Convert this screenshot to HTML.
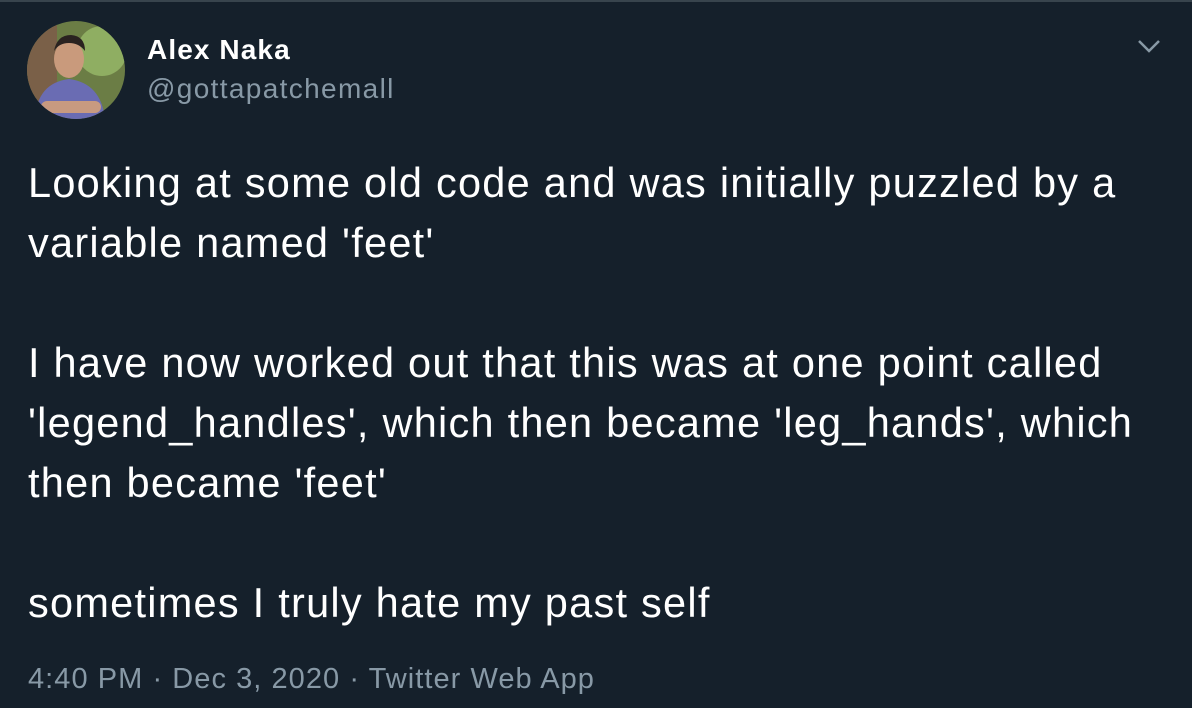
<!DOCTYPE html>
<html><head><style>
html,body{margin:0;padding:0}
body{width:1192px;height:708px;background:#15202b;overflow:hidden;font-family:"Liberation Sans",Arial,sans-serif;position:relative;color:#fff}
.top{position:absolute;left:0;top:0;width:1192px;height:2px;background:#38444d}
.av{position:absolute;left:27px;top:21px;width:98px;height:98px;border-radius:50%;overflow:hidden}
.name{position:absolute;left:147px;top:34px;font-size:28px;font-weight:bold;letter-spacing:1.1px}
.handle{position:absolute;left:147px;top:73px;font-size:28px;color:#8899a6;letter-spacing:1.35px}
.txt{position:absolute;left:28px;top:153px;font-size:41.5px;line-height:60px;width:1160px;letter-spacing:1.25px;white-space:nowrap}
.meta{position:absolute;left:28px;top:663px;font-size:29px;color:#8899a6;letter-spacing:1.05px}
</style></head><body>
<div class="top"></div>
<div class="av">
<svg width="98" height="98" viewBox="0 0 98 98">
<rect width="98" height="98" fill="#6b7d45"/>
<rect x="0" y="0" width="30" height="98" fill="#7a6048"/>
<circle cx="75" cy="30" r="25" fill="#8fae62"/>
<ellipse cx="42" cy="38" rx="15" ry="19" fill="#c99a7c"/>
<path d="M27 30 Q30 14 44 14 Q58 15 58 30 Q52 22 42 22 Q32 22 27 30Z" fill="#2a2220"/>
<path d="M8 98 Q10 62 42 58 Q74 62 78 98Z" fill="#6a6cb3"/>
<rect x="14" y="80" width="60" height="12" rx="6" fill="#c89a80"/>
</svg></div>
<div class="name">Alex Naka</div>
<div class="handle">@gottapatchemall</div>
<svg style="position:absolute;left:1137px;top:38px" width="24" height="16" viewBox="0 0 24 16"><path d="M2 3 L12 13 L22 3" fill="none" stroke="#8899a6" stroke-width="2.5"/></svg>
<div class="txt">Looking at some old code and was initially puzzled by a<br>variable named 'feet'<br><br>I have now worked out that this was at one point called<br>'legend_handles', which then became 'leg_hands', which<br>then became 'feet'<br><br>sometimes I truly hate my past self</div>
<div class="meta">4:40 PM · Dec 3, 2020 · Twitter Web App</div>
</body></html>
